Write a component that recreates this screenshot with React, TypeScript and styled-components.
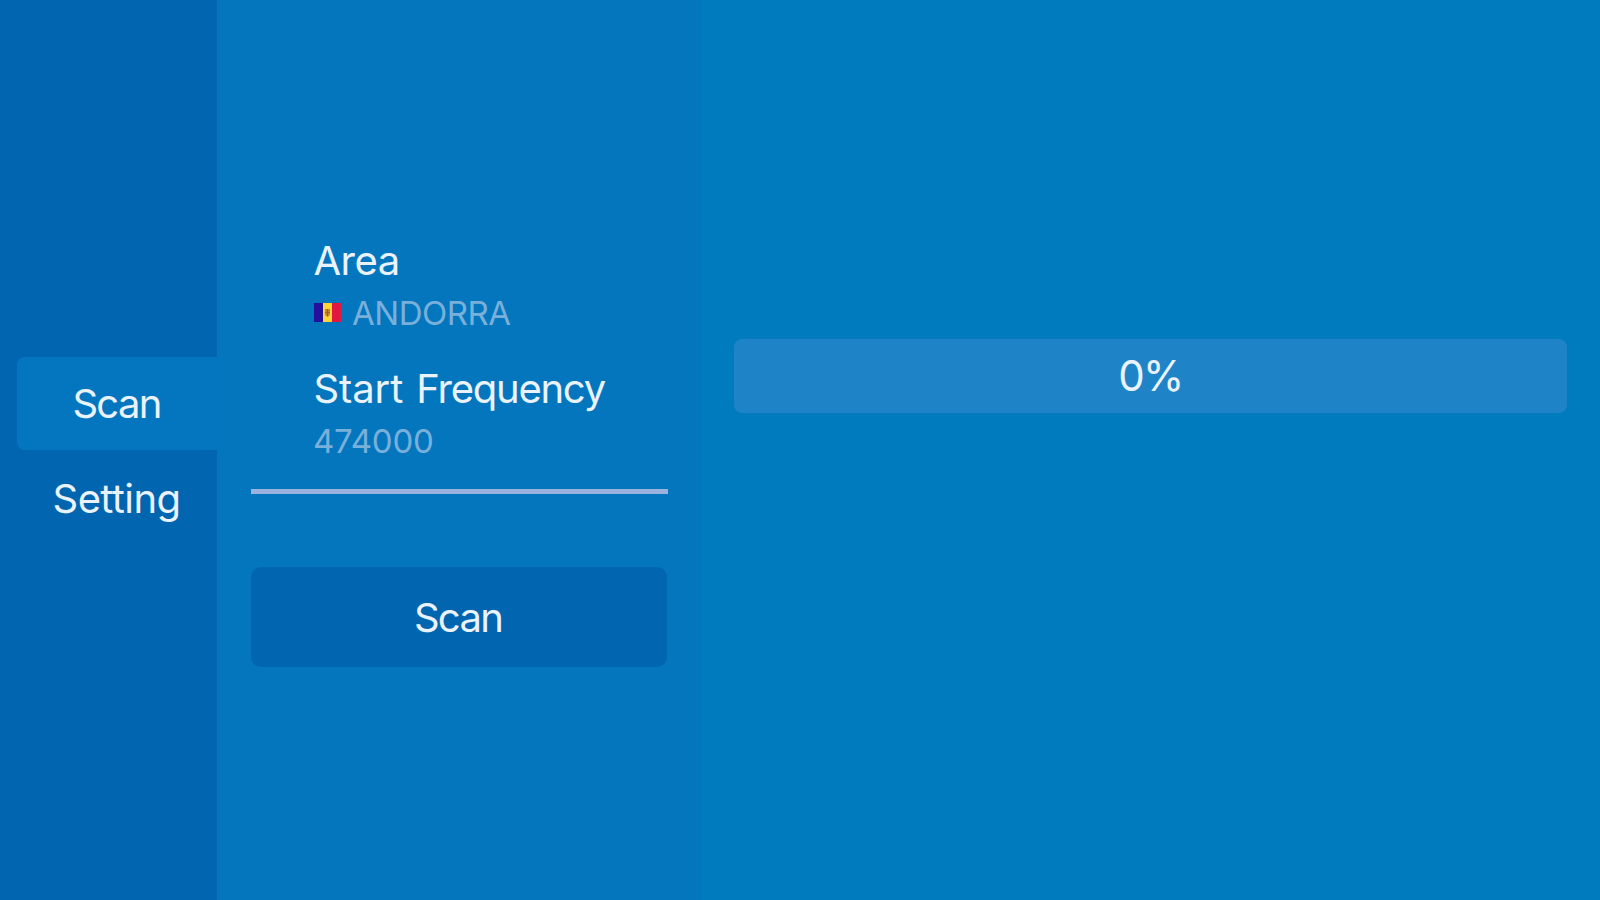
import React from "react";
import styled, { createGlobalStyle } from "styled-components";

const GlobalStyle = createGlobalStyle`
  *, *::before, *::after { box-sizing: border-box; }
  body { margin: 0; background: #007bbe; overflow: hidden; }
`;

const Screen = styled.div`
  display: flex;
  width: 1600px;
  height: 900px;
  background: #007bbe;
  color: #eaf2fd;
  font-family: Inter, "Liberation Sans", Arial, sans-serif;
  font-size: 40px;
  line-height: 46px;
  white-space: nowrap;
`;

const Sidebar = styled.nav`
  display: flex;
  flex-direction: column;
  flex: 0 0 217px;
  padding: 357px 0 0 17px;
  background: #0265af;
`;

const Tab = styled.button<{ $active?: boolean }>`
  display: flex;
  align-items: center;
  justify-content: center;
  height: ${({ $active }) => ($active ? 93 : 98)}px;
  padding: 0 1px 0 0;
  border: 0;
  border-radius: 8px 0 0 8px;
  background: ${({ $active }) => ($active ? "#0476bf" : "transparent")};
  color: inherit;
  font: inherit;
`;

const Panel = styled.section`
  display: flex;
  flex-direction: column;
  flex: 0 0 485px;
  padding: 238px 34px 0;
  background: #0476be;
`;

const Fields = styled.div`
  display: flex;
  flex-direction: column;
  gap: 33px;
  height: 256px;
  padding-left: 62px;
  border-bottom: 5px solid #9bb2df;
`;

const Field = styled.div`
  display: flex;
  flex-direction: column;
  gap: 9px;
`;

const Label = styled.div`
  padding-left: 0.5px;
  word-spacing: 2px;
`;

const Value = styled.div`
  display: flex;
  align-items: center;
  height: 40px;
  color: #78b0da;
  font-size: 33px;
`;

const Flag = styled.svg`
  width: 27px;
  height: 19px;
  margin: 0 11px 1px 1px;
`;

const Text = styled.span<{ $spacing?: number }>`
  letter-spacing: ${({ $spacing = 0 }) => $spacing}px;
`;

const ScanButton = styled.button`
  height: 100px;
  margin: 73px 1px 0 0;
  padding: 2px 2px 0 0;
  border: 0;
  border-radius: 10px;
  background: #0265af;
  color: inherit;
  font: inherit;
`;

const Results = styled.main`
  flex: 1;
  padding: 339px 33px 0 32px;
`;

const Progress = styled.div`
  display: flex;
  align-items: center;
  justify-content: center;
  height: 74px;
  border-radius: 8px;
  background: #1e84c7;
  font-size: 42px;
`;

export default function App() {
  return (
    <>
      <GlobalStyle />
      <Screen>
        <Sidebar>
          <Tab $active><Text $spacing={-1.7}>Scan</Text></Tab>
          <Tab><Text $spacing={-0.6}>Setting</Text></Tab>
        </Sidebar>
        <Panel>
          <Fields>
            <Field>
              <Label><Text $spacing={-0.5}>Area</Text></Label>
              <Value>
                <Flag viewBox="0 0 27 19" aria-hidden="true">
                  <rect width="9" height="19" fill="#24109c" />
                  <rect x="9" width="9" height="19" fill="#fbd536" />
                  <rect x="18" width="9" height="19" fill="#e01842" />
                  <path d="M11 6h5v5q0 2-2.5 3Q11 13 11 11Z" fill="#c98432" />
                  <path d="M13 6h1v7h-1zM11 9h5v1h-5z" fill="#a95a35" />
                </Flag>
                <Text $spacing={-0.5}>ANDORRA</Text>
              </Value>
            </Field>
            <Field>
              <Label>
                <Text $spacing={-0.1}>Start </Text>
                <Text $spacing={-1.25}>Frequency</Text>
              </Label>
              <Value><Text $spacing={-0.2}>474000</Text></Value>
            </Field>
          </Fields>
          <ScanButton><Text $spacing={-1.7}>Scan</Text></ScanButton>
        </Panel>
        <Results>
          <Progress><Text $spacing={-1.7}>0%</Text></Progress>
        </Results>
      </Screen>
    </>
  );
}
